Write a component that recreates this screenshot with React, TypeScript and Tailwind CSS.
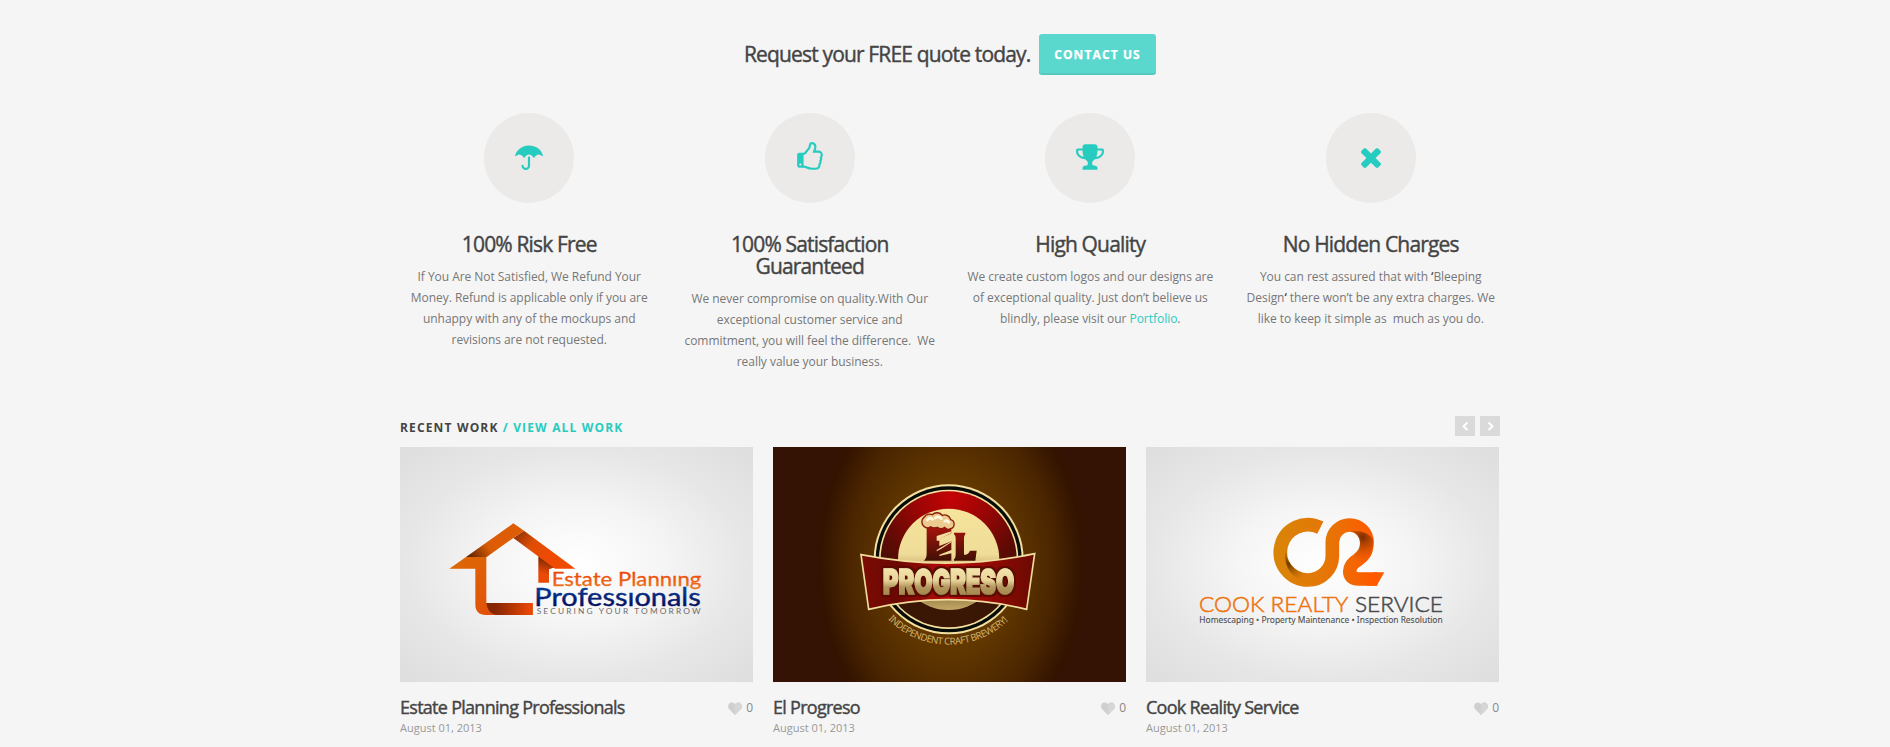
import React from "react";

const ICONS = {
  umbrella:
    "M960 874v542q0 104-76 180t-180 76-180-76-76-180q0-26 19-45t45-19 45 19 19 45q0 50 39 89t89 39 89-39 39-89v-542q33-11 64-11t64 11zm768-57q0 13-9.5 22.5t-22.5 9.5q-11 0-23-10-49-46-93-69t-102-23q-68 0-128 37t-103 97q-7 10-17.5 28t-14.5 24q-11 17-28 17-18 0-29-17-4-6-14.5-24t-17.5-28q-43-60-102.5-97t-127.5-37-127.5 37-102.5 97q-7 10-17.5 28t-14.5 24q-11 17-29 17-17 0-28-17-4-6-14.5-24t-17.5-28q-43-60-103-97t-128-37q-58 0-102 23t-93 69q-12 10-23 10-13 0-22.5-9.5t-9.5-22.5q0-5 1-7 45-183 172.5-319.5t298-207.5 360.5-71q140 0 274.5 40t246.5 113.5 194.5 187 115.5 251.5q1 2 1 7zm-768-527v98q-42-2-64-2t-64 2v-98q0-26 19-45t45-19 45 19 19 45z",
  thumb:
    "M384 1344q0-26-19-45t-45-19-45 19-19 45 19 45 45 19 45-19 19-45zm1152-576q0-51-39-89.5t-89-38.5h-352q0-58 48-159.5t48-160.5q0-98-32-145t-128-47q-26 26-38 85t-30.5 125.5-59.5 109.5q-22 23-77 91-4 5-23 30t-31.5 41-34.5 42.5-40 44-38.5 35.5-40 27-35.5 9h-32v640h32q13 0 31.5 3t33 6.5 38 11 35 11.5 35.5 12.5 29 10.5q211 73 342 73h121q192 0 192-167 0-26-5-56 30-16 47.5-52.5t17.5-73.5-18-69q53-50 53-119 0-25-10-55.5t-25-47.5q32-1 53.5-47t21.5-81zm128-1q0 89-49 163 9 33 9 69 0 77-38 144 3 21 3 43 0 101-60 178 1 139-85 219.5t-227 80.5h-129q-96 0-189.5-22.5t-216.5-65.5q-116-40-138-40h-288q-53 0-90.5-37.5t-37.5-90.5v-640q0-53 37.5-90.5t90.5-37.5h274q36-24 137-155 58-75 107-128 24-25 35.5-85.5t30.5-126.5 62-108q39-37 90-37 84 0 151 32.5t102 101.5 35 186q0 93-48 192h176q104 0 180 76t76 179z",
  trophy:
    "M522 883q-74-162-74-371h-256v96q0 78 94.5 162t235.5 113zm1078-275v-96h-256q0 209-74 371 141-29 235.5-113t94.5-162zm128-128v128q0 71-41.5 143t-112 130-173 97.5-215.5 44.5q-42 54-95 95-38 34-52.5 72.5t-14.5 89.5q0 54 30.5 91t97.5 37q75 0 133.5 45.5t58.5 114.5v64q0 14-9 23t-23 9h-832q-14 0-23-9t-9-23v-64q0-69 58.5-114.5t133.5-45.5q67 0 97.5-37t30.5-91q0-51-14.5-89.5t-52.5-72.5q-53-41-95-95-113-5-215.5-44.5t-173-97.5-112-130-41.5-143v-128q0-40 28-68t68-28h288v-96q0-66 47-113t113-47h576q66 0 113 47t47 113v96h288q40 0 68 28t28 68z",
  times:
    "M1490 1322q0 40-28 68l-136 136q-28 28-68 28t-68-28l-294-294-294 294q-28 28-68 28t-68-28l-136-136q-28-28-28-68t28-68l294-294-294-294q-28-28-28-68t28-68l136-136q28-28 68-28t68 28l294 294 294-294q28-28 68-28t68 28l136 136q28 28 28 68t-28 68l-294 294 294 294q28 28 28 68z",
};

const FEATURES: { icon: keyof typeof ICONS; title: React.ReactNode; lines: React.ReactNode[] }[] = [
  {
    icon: "umbrella",
    title: "100% Risk Free",
    lines: [
      "If You Are Not Satisfied, We Refund Your",
      "Money. Refund is applicable only if you are",
      "unhappy with any of the mockups and",
      "revisions are not requested.",
    ],
  },
  {
    icon: "thumb",
    title: (
      <>
        100% Satisfaction
        <br />
        Guaranteed
      </>
    ),
    lines: [
      "We never compromise on quality.With Our",
      "exceptional customer service and",
      "commitment, you will feel the difference.\u00a0 We",
      "really value your business.",
    ],
  },
  {
    icon: "trophy",
    title: "High Quality",
    lines: [
      "We create custom logos and our designs are",
      "of exceptional quality. Just don’t believe us",
      <>
        blindly, please visit our <a className="text-[#27ccc0]">Portfolio</a>.
      </>,
    ],
  },
  {
    icon: "times",
    title: "No Hidden Charges",
    lines: [
      <>
        You can rest assured that with <b className="font-semibold text-[#444]">‘</b>Bleeping
      </>,
      <>
        Design<b className="font-semibold text-[#444]">‘</b> there won’t be any extra charges. We
      </>,
      "like to keep it simple as\u00a0 much as you do.",
    ],
  },
];

function EstateLogo() {
  return (
    <svg viewBox="0 0 353 235" className="block h-[235px] w-full">
      <defs>
        <radialGradient id="eBg" cx="50%" cy="50%" r="70%">
          <stop offset="0" stopColor="#ffffff" />
          <stop offset="0.35" stopColor="#f5f5f5" />
          <stop offset="0.7" stopColor="#e6e6e6" />
          <stop offset="1" stopColor="#dedede" />
        </radialGradient>
        <linearGradient id="eWall" x1="0" y1="0" x2="1" y2="1">
          <stop offset="0" stopColor="#dc6a06" />
          <stop offset="1" stopColor="#e4480a" />
        </linearGradient>
        <linearGradient id="eRoofL" gradientUnits="userSpaceOnUse" x1="120" y1="145" x2="190" y2="95">
          <stop offset="0" stopColor="#5e2305" />
          <stop offset="0.75" stopColor="#d85c06" />
          <stop offset="1" stopColor="#de5c06" />
        </linearGradient>
        <linearGradient id="eRoofR" gradientUnits="userSpaceOnUse" x1="255" y1="70" x2="350" y2="140">
          <stop offset="0" stopColor="#8c3004" />
          <stop offset="0.5" stopColor="#df4d05" />
          <stop offset="1" stopColor="#ee4a03" />
        </linearGradient>
        <linearGradient id="eLeg" gradientUnits="userSpaceOnUse" x1="345" y1="150" x2="335" y2="190">
          <stop offset="0" stopColor="#8a2a05" />
          <stop offset="1" stopColor="#ea4a06" />
        </linearGradient>
        <linearGradient id="eBase" gradientUnits="userSpaceOnUse" x1="195" y1="290" x2="300" y2="300">
          <stop offset="0" stopColor="#842503" />
          <stop offset="1" stopColor="#e84805" />
        </linearGradient>
        <linearGradient id="eText" x1="0" y1="0" x2="0" y2="1">
          <stop offset="0.2" stopColor="#ea4204" />
          <stop offset="1" stopColor="#ee7a1c" />
        </linearGradient>
        <linearGradient id="eBlue" x1="0" y1="0" x2="0" y2="1">
          <stop offset="0.2" stopColor="#0a3d94" />
          <stop offset="0.85" stopColor="#020c5c" />
        </linearGradient>
      </defs>
      <rect width="353" height="235" fill="url(#eBg)" />
      <g transform="translate(30 63) scale(0.33333)">
        <path d="M58 176 108 141H169V279H308V315H168Q136 315 136 283V176Z" fill="url(#eWall)" />
        <path d="M169 279H308V315H205Q174 315 169 279Z" fill="url(#eBase)" />
        <path d="M325 138 375 172 357 178V218H325Z" fill="url(#eLeg)" />
        <path d="M250 84 282 62 436 176H375Z" fill="url(#eRoofR)" />
        <path d="M108 141 250 40 282 62 250 84 170 141Z" fill="url(#eRoofL)" />
        <g fontFamily="Lato, sans-serif">
          <text x="365" y="227" fontSize="57" fill="url(#eText)" stroke="url(#eText)" strokeWidth="0.8" textLength="449" lengthAdjust="spacingAndGlyphs">
            Estate Plannıng
          </text>
          <text x="313" y="288" fontSize="73" fill="url(#eBlue)" stroke="url(#eBlue)" strokeWidth="1.2" textLength="499" lengthAdjust="spacingAndGlyphs">
            Professıonals
          </text>
          <text x="320" y="313" fontSize="25" fill="#6c6c6c" textLength="492">
            SECURING YOUR TOMORROW
          </text>
        </g>
      </g>
    </svg>
  );
}

function ProgresoLogo() {
  return (
    <svg viewBox="0 0 353 235" className="block h-[235px] w-full">
      <defs>
        <radialGradient id="pBg" gradientUnits="userSpaceOnUse" cx="0" cy="0" r="1" gradientTransform="translate(178 117) scale(138 195)">
          <stop offset="0" stopColor="#6c4000" />
          <stop offset="0.45" stopColor="#613700" />
          <stop offset="0.75" stopColor="#4a2500" />
          <stop offset="0.95" stopColor="#331300" />
          <stop offset="1" stopColor="#341204" />
        </radialGradient>
        <radialGradient id="pRed" gradientUnits="userSpaceOnUse" cx="335" cy="80" r="340">
          <stop offset="0" stopColor="#c40306" />
          <stop offset="0.35" stopColor="#960604" />
          <stop offset="0.65" stopColor="#600a04" />
          <stop offset="0.95" stopColor="#381204" />
          <stop offset="1" stopColor="#3a1604" />
        </radialGradient>
        <linearGradient id="pCream" x1="0" y1="0" x2="0" y2="1">
          <stop offset="0" stopColor="#f6e49c" />
          <stop offset="0.45" stopColor="#eedc98" />
          <stop offset="0.55" stopColor="#d8b878" />
          <stop offset="0.9" stopColor="#a58a50" />
          <stop offset="1" stopColor="#c4a868" />
        </linearGradient>
        <linearGradient id="pBanner" x1="0" y1="0" x2="1" y2="0">
          <stop offset="0" stopColor="#7c0c04" />
          <stop offset="0.2" stopColor="#6a0802" />
          <stop offset="0.5" stopColor="#b80c0a" />
          <stop offset="0.8" stopColor="#8a0a04" />
          <stop offset="1" stopColor="#6a0a02" />
        </linearGradient>
        <linearGradient id="pLetters" gradientUnits="userSpaceOnUse" x1="0" y1="295" x2="0" y2="375">
          <stop offset="0" stopColor="#f4e4ac" />
          <stop offset="0.45" stopColor="#e8d498" />
          <stop offset="0.7" stopColor="#b49660" />
          <stop offset="1" stopColor="#a3884c" />
        </linearGradient>
        <filter id="pOutline" filterUnits="userSpaceOnUse" x="100" y="260" width="460" height="150">
          <feMorphology in="SourceAlpha" operator="dilate" radius="6" result="fat" />
          <feFlood floodColor="#5c0804" />
          <feComposite in2="fat" operator="in" result="edge" />
          <feMerge>
            <feMergeNode in="edge" />
            <feMergeNode in="SourceGraphic" />
          </feMerge>
        </filter>
        <linearGradient id="pEl" gradientUnits="userSpaceOnUse" x1="0" y1="170" x2="0" y2="272">
          <stop offset="0" stopColor="#a8140c" />
          <stop offset="1" stopColor="#401004" />
        </linearGradient>
        <path id="pArc" d="M144 448A256 256 0 0 0 508 448" />
      </defs>
      <rect width="353" height="235" fill="url(#pBg)" />
      <g transform="translate(67 23) scale(0.33333)">
        <circle cx="326" cy="268" r="225" fill="#f3e0a0" />
        <circle cx="326" cy="268" r="219" fill="#080c08" />
        <circle cx="326" cy="268" r="209" fill="#f3e0a0" />
        <circle cx="326" cy="268" r="204" fill="url(#pRed)" />
        <circle cx="326" cy="268" r="152" fill="url(#pCream)" />
        <g fill="url(#pEl)">
          <path d="M252 272Q260 266 260 250V165H334V190L298 206V228L334 214V240L298 254V258L334 250V272Z" />
          <path d="M342 188H376V193Q372 196 372 204V254Q384 256 390 242H410L406 272H342V268Q347 264 347 254V204Q347 196 342 193Z" />
          <path d="M290 198 334 184V189L300 206V212H290Z" fill="#f3e0a0" />
          <path d="M290 240 334 214V217L304 236 290 244Z" fill="#f3e0a0" />
        </g>
        <path
          d="M256 172A18 18 0 0 1 252 142A20 20 0 0 1 277 134A20 20 0 0 1 307 136A19 19 0 0 1 332 149A14 14 0 0 1 332 176Q322 182 314 172Q304 180 292 172Q280 176 272 170Q264 176 256 172Z"
          fill="#eccb90"
          stroke="#8a1a0c"
          strokeWidth="4"
        />
        <path d="M262 150q8-10 16-2M286 144q10-8 18 2M314 154q8-5 12 3" fill="none" stroke="#fff8e0" strokeWidth="8" strokeLinecap="round" />
        <path d="M63 254Q326 306 584 251L560 418Q326 360 86 418Z" fill="url(#pBanner)" stroke="#f0dc9c" strokeWidth="5" />
        <text
          x="129"
          y="373"
          fontFamily="Inter, 'Liberation Sans', sans-serif"
          fontWeight="900"
          fontSize="104"
          fill="url(#pLetters)"
          stroke="url(#pLetters)"
          strokeWidth="5"
          filter="url(#pOutline)"
          textLength="394"
          lengthAdjust="spacingAndGlyphs"
        >
          PROGRESO
        </text>
        <text fontFamily="'Noto Sans', sans-serif" fontSize="29" fill="#d0b068" textLength="400">
          <textPath href="#pArc">INDEPENDENT CRAFT BREWERY!</textPath>
        </text>
      </g>
    </svg>
  );
}

function CookLogo() {
  return (
    <svg viewBox="0 0 353 235" className="block h-[235px] w-full">
      <defs>
        <radialGradient id="cBg" cx="50%" cy="50%" r="70%">
          <stop offset="0" stopColor="#ffffff" />
          <stop offset="0.35" stopColor="#f5f5f5" />
          <stop offset="0.7" stopColor="#e6e6e6" />
          <stop offset="1" stopColor="#dedede" />
        </radialGradient>
        <linearGradient id="cMark" gradientUnits="userSpaceOnUse" x1="281" y1="0" x2="600" y2="0">
          <stop offset="0" stopColor="#d88508" />
          <stop offset="0.5" stopColor="#e67606" />
          <stop offset="0.9" stopColor="#fc5c00" />
          <stop offset="1" stopColor="#ff5a00" />
        </linearGradient>
        <radialGradient id="cShadeC" gradientUnits="userSpaceOnUse" cx="328" cy="190" r="60">
          <stop offset="0" stopColor="#5a3000" stopOpacity="0.9" />
          <stop offset="1" stopColor="#b06004" stopOpacity="0" />
        </radialGradient>
        <radialGradient id="cShadeR" gradientUnits="userSpaceOnUse" cx="548" cy="112" r="75">
          <stop offset="0" stopColor="#6a2800" stopOpacity="0.9" />
          <stop offset="1" stopColor="#e05000" stopOpacity="0" />
        </radialGradient>
      </defs>
      <rect width="353" height="235" fill="url(#cBg)" />
      <g transform="translate(34 53) scale(0.33333)">
        <path
          d="M421 82.700A83 83 0 1 0 384 240A73 73 0 0 0 457 167V127A52 52 0 0 1 561 127C561 156 550 168 533 180C502 196 500 237 535 237H592"
          fill="none"
          stroke="url(#cMark)"
          strokeWidth="41"
        />
        <path d="M580 216.500H613L590 257.500H560Z" fill="#ff5a00" />
        <path d="M322 135A64 64 0 0 0 384 219L420 214Q400 250 360 240Q312 215 316 160Z" fill="url(#cShadeC)" />
        <path d="M510 94Q540 100 540 130Q540 150 520 162L528 194Q581 180 580 120Q560 88 510 94Z" fill="url(#cShadeR)" />
        <g fontFamily="Lato, sans-serif" fontSize="67" fontWeight="300" strokeWidth="1.6">
          <text x="57" y="335" fill="#ee7410" stroke="#ee7410" textLength="448" lengthAdjust="spacingAndGlyphs">
            COOK REALTY
          </text>
          <text x="525" y="335" fill="#4a4a4c" stroke="#4a4a4c" textLength="264" lengthAdjust="spacingAndGlyphs">
            SERVICE
          </text>
        </g>
        <text x="58" y="369" fontFamily="'Noto Sans', sans-serif" fontSize="25" fill="#505050" stroke="#505050" strokeWidth="0.3" textLength="730" lengthAdjust="spacingAndGlyphs">
          Homescaping • Property Maintenance • Inspection Resolution
        </text>
      </g>
    </svg>
  );
}

const WORK = [
  { title: "Estate Planning Professionals", Logo: EstateLogo },
  { title: "El Progreso", Logo: ProgresoLogo },
  { title: "Cook Reality Service", Logo: CookLogo },
];

function Arrow({ d }: { d: string }) {
  return (
    <button className="flex size-5 items-center justify-center bg-[#dadada]">
      <svg viewBox="0 0 20 20" className="size-5" fill="none" stroke="#fff" strokeWidth="2">
        <path d={d} />
      </svg>
    </button>
  );
}

export default function App() {
  return (
    <div className="h-[747px] w-full overflow-hidden bg-[#f5f5f5] font-['Open_Sans',sans-serif] text-[#444]">
      <div className="ml-[400px] w-[1100px]">
        <header className="flex h-[113px] items-start pt-[34px] pl-[344px]">
          <h2 className="h-[41px] w-[295px] text-[21px] leading-[41px] tracking-[-0.84px] whitespace-nowrap [-webkit-text-stroke:0.4px_#444]">
            Request your FREE quote today.
          </h2>
          <a className="h-[41px] w-[117px] rounded-[3px] border-b-2 border-[#55c9be] bg-[#5bd8cd] text-center text-[12px] leading-[41px] font-bold tracking-[1.1px] text-white [-webkit-text-stroke:0.25px_#fff]">
            CONTACT US
          </a>
        </header>

        <section className="grid h-[303px] grid-cols-4 gap-[22px]">
          {FEATURES.map((f) => (
            <div key={f.icon} className="flex flex-col items-center text-center">
              <div className="flex size-[90px] items-center justify-center rounded-full bg-[#ebeae8] pb-[2px]">
                <svg viewBox="0 0 1792 1792" className="size-[30px] fill-[#27ccc0]">
                  <path d={ICONS[f.icon]} />
                </svg>
              </div>
              <h3 className="mt-[30px] text-[21px] leading-[22px] tracking-[-0.84px] whitespace-nowrap [-webkit-text-stroke:0.4px_#444]">
                {f.title}
              </h3>
              <p className="mt-[11px] text-[12px] leading-[21px] tracking-[-0.04px] whitespace-nowrap text-[#777]">
                {f.lines.map((line, i) => (
                  <span key={i} className="block">
                    {line}
                  </span>
                ))}
              </p>
            </div>
          ))}
        </section>

        <section>
          <div className="flex h-[31px] items-start justify-between">
            <h4 className="text-[12px] leading-[24px] font-bold tracking-[1.15px]">
              RECENT WORK <span className="text-[#27ccc0]">/ VIEW ALL WORK</span>
            </h4>
            <div className="flex gap-[5px]">
              <Arrow d="M12.500 6.500 8.500 10.300 12.500 14" />
              <Arrow d="M8.500 6.500 12.500 10.300 8.500 14" />
            </div>
          </div>
          <div className="flex gap-5">
            {WORK.map(({ title, Logo }) => (
              <article key={title} className="w-[353px]">
                <Logo />
                <div className="flex items-start justify-between pt-[13px]">
                  <div>
                    <h4 className="text-[18px] leading-[24px] tracking-[-0.72px] [-webkit-text-stroke:0.4px_#444]">{title}</h4>
                    <p className="text-[11px] leading-[17px] text-[#999]">August 01, 2013</p>
                  </div>
                  <div className="flex items-center gap-1 text-[12px] leading-[26px] text-[#888]">
                    <svg viewBox="0 0 14 13" className="h-[13px] w-[14px]">
                      <path d="M7 13 1 7C-.8 5 .2.500 3.600.500 5.300.500 6.400 1.300 7 2.400 7.600 1.300 8.700.500 10.400.500 13.800.500 14.800 5 13 7Z" fill="#cfcfcf" />
                      <path d="M7 13V2.400C7.600 1.300 8.700.500 10.400.500 13.800.500 14.800 5 13 7Z" fill="#d6d6d6" />
                    </svg>
                    0
                  </div>
                </div>
              </article>
            ))}
          </div>
        </section>
      </div>
    </div>
  );
}
